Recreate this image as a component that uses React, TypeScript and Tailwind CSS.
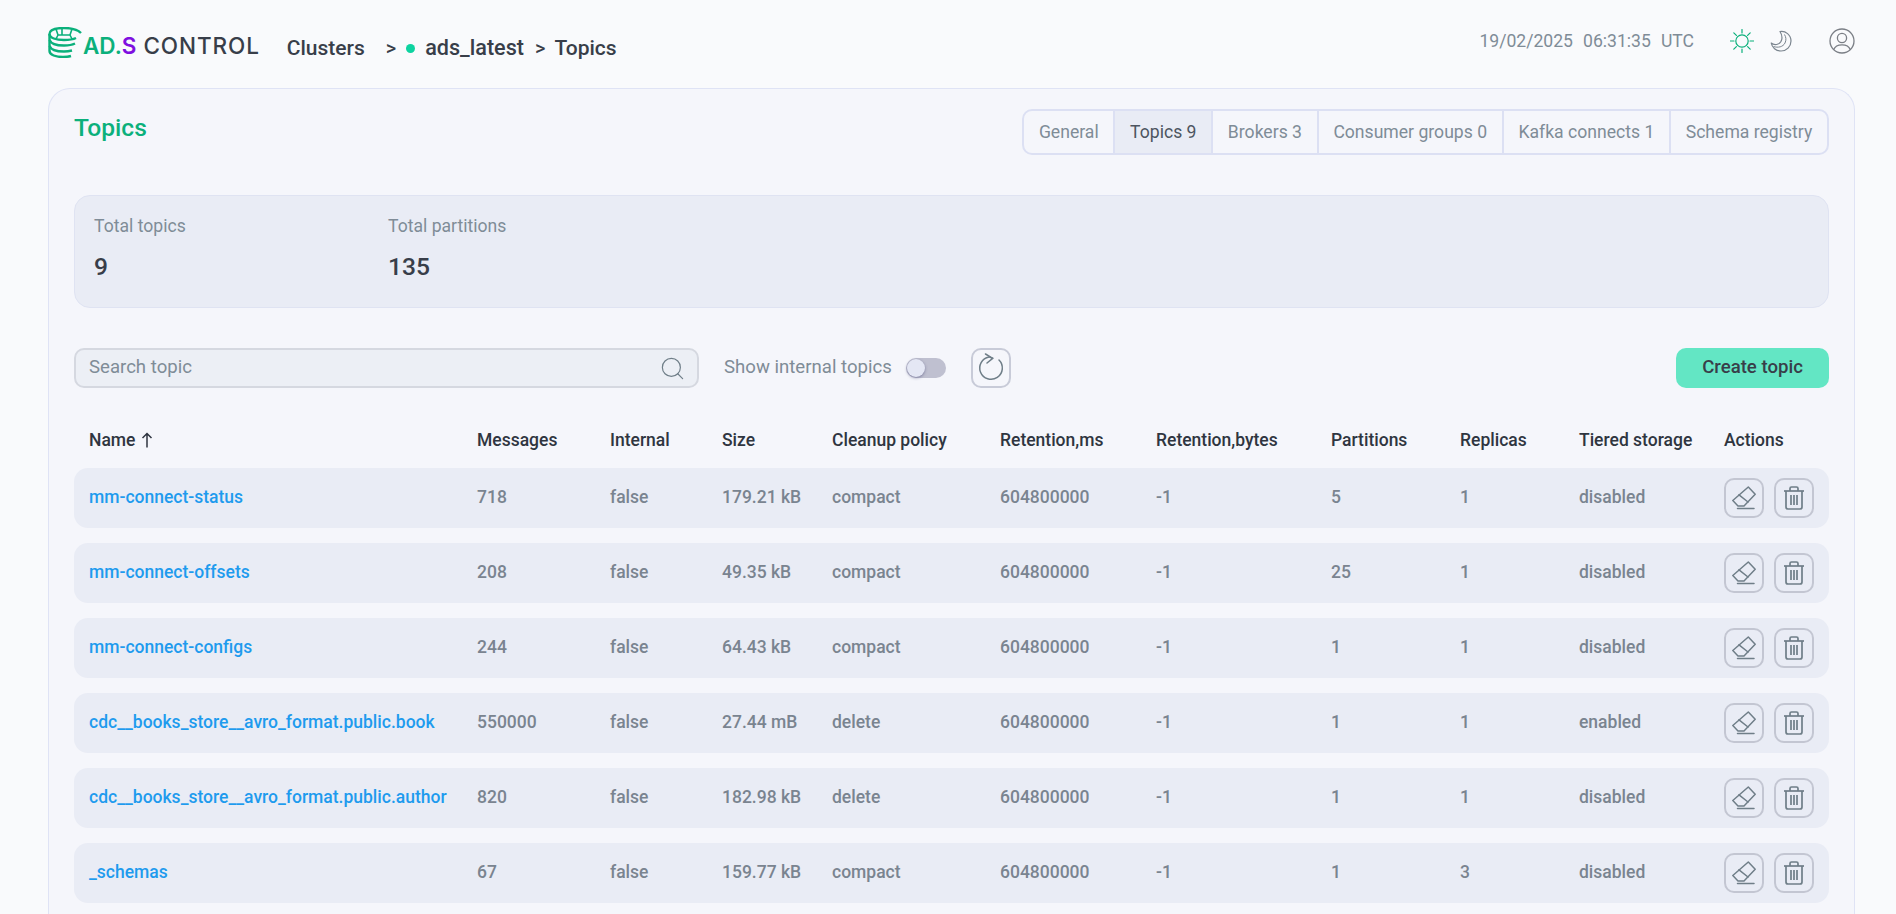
import { Search } from 'lucide-react'

const rowGrid =
  'grid grid-cols-[388px_133px_112px_110px_168px_156px_175px_129px_119px_145px_1fr] items-center pl-[15px]'

const topics = [
  { name: 'mm-connect-status', messages: '718', size: '179.21 kB', cleanup: 'compact', partitions: '5', replicas: '1', tiered: 'disabled' },
  { name: 'mm-connect-offsets', messages: '208', size: '49.35 kB', cleanup: 'compact', partitions: '25', replicas: '1', tiered: 'disabled' },
  { name: 'mm-connect-configs', messages: '244', size: '64.43 kB', cleanup: 'compact', partitions: '1', replicas: '1', tiered: 'disabled' },
  { name: 'cdc__books_store__avro_format.public.book', messages: '550000', size: '27.44 mB', cleanup: 'delete', partitions: '1', replicas: '1', tiered: 'enabled' },
  { name: 'cdc__books_store__avro_format.public.author', messages: '820', size: '182.98 kB', cleanup: 'delete', partitions: '1', replicas: '1', tiered: 'disabled' },
  { name: '_schemas', messages: '67', size: '159.77 kB', cleanup: 'compact', partitions: '1', replicas: '3', tiered: 'disabled' },
]

const tabs = [
  { label: 'General' },
  { label: 'Topics 9', active: true },
  { label: 'Brokers 3' },
  { label: 'Consumer groups 0' },
  { label: 'Kafka connects 1' },
  { label: 'Schema registry' },
]

function Logo() {
  return (
    <svg width="34" height="31" viewBox="0 0 34 31" fill="none" stroke="#0bb07b" strokeWidth="2.4">
      <path d="M33 6 C29 2 22 1 16 1 C8 1 1.5 3 1.5 7 C1.5 11 8 13 16 13 C21 13 25 12.5 28 11" />
      <path d="M8 2 L10 8 L22 8 L24 2 M10 8 L8 12 M22 8 L24 12 M14 2 L14 8" strokeWidth="1.6" />
      <path d="M1.5 7 V24 C1.5 28 8 30 15 30 C18 30 21 29.6 23 29" />
      <path d="M1.5 13 C3 17 9 18.5 16 18.5 C20 18.5 24 18 27 16.5" />
      <path d="M1.5 19 C3 23 9 24.5 16 24.5 C19 24.5 22 24 24 23.5" />
    </svg>
  )
}

function SunIcon() {
  return (
    <svg width="24" height="24" viewBox="0 0 24 24" fill="none" stroke="#0bb07b" strokeWidth="1.2" strokeLinecap="round">
      <circle cx="12" cy="12" r="6.2" />
      <path d="M12 0.5v3.5M12 20v3.5M0.5 12h3.5M20 12h3.5M3.8 3.8l2.6 2.6M17.6 17.6l2.6 2.6M3.8 20.2l2.6-2.6M17.6 6.4l2.6-2.6" />
    </svg>
  )
}

function MoonIcon() {
  return (
    <svg width="22" height="22" viewBox="0 0 22 22" fill="none" stroke="#7b858f" strokeWidth="1.2" strokeLinejoin="round">
      <path d="M10 1.5 C15.5 0.5 21 5 21 11 C21 16.5 16.5 21 11 21 C6 21 2 17.5 1.2 13 C3 14.5 5.5 15 8 14 C12 12.5 13.5 7 10 1.5 Z" />
      <path d="M3.5 16.5 C8 18 13 17 15 13 C16.5 10 16 7 14.5 4.5" strokeWidth="1" />
    </svg>
  )
}

function UserIcon() {
  return (
    <svg width="26" height="26" viewBox="0 0 26 26" fill="none" stroke="#7b7f86" strokeWidth="1.3">
      <circle cx="13" cy="13" r="12" />
      <circle cx="13" cy="10" r="4.6" />
      <path d="M4.8 21.5 C6 18 9 16.8 13 16.8 C17 16.8 20 18 21.2 21.5" />
    </svg>
  )
}

function RefreshIcon() {
  return (
    <svg width="30" height="30" viewBox="0 0 30 30" fill="none" stroke="#6f7e88" strokeWidth="1.5" strokeLinecap="round" strokeLinejoin="round">
      <path d="M23 7 A11.3 11.3 0 1 1 13 3.9 L16.7 5.3" />
      <path d="M9.5 1 L16.7 5.3 L11 10" />
    </svg>
  )
}

function EraserIcon() {
  return (
    <svg width="24" height="24" viewBox="0 0 24 24" fill="none" stroke="#6f7e88" strokeWidth="1.5" strokeLinejoin="round" strokeLinecap="round">
      <path d="M0.8 14.5 L16.3 1 L23.2 8.3 L12 20 H6 Z" />
      <path d="M7 8.8 L16 16" />
      <path d="M5.5 22.5 H22" />
    </svg>
  )
}

function TrashIcon() {
  return (
    <svg width="22" height="24" viewBox="0 0 22 24" fill="none" stroke="#6f7e88" strokeWidth="1.7" strokeLinejoin="round">
      <path d="M1 5 H21" />
      <path d="M7 5 V2.5 C7 1.5 7.5 1 8.5 1 H13.5 C14.5 1 15 1.5 15 2.5 V5" />
      <path d="M3 5 V21 C3 22.2 3.8 23 5 23 H17 C18.2 23 19 22.2 19 21 V5" />
      <path d="M8 9 V19 M11 9 V19 M14 9 V19" />
    </svg>
  )
}

function IconButton({ children }: { children: React.ReactNode }) {
  return (
    <button className="flex h-[40px] w-[40px] items-center justify-center rounded-[10px] border-2 border-[#c3c6d2]">
      {children}
    </button>
  )
}

export default function App() {
  return (
    <div className="flex h-screen flex-col overflow-hidden bg-[#f9fafc] pl-[48px] pr-[41px] font-['Roboto',sans-serif] text-[17.6px]">
      {/* Header */}
      <header className="flex h-[88px] shrink-0 items-start">
        <div className="mt-[27px] flex items-end">
          <Logo />
          <span className="ml-[1px] font-['Inter',sans-serif] text-[22.5px] font-semibold leading-[24px] text-[#0bb07b]">
            AD.<span className="text-[#7f0fe0]">S</span>
            <span className="ml-[7px] font-medium tracking-[0.9px] text-[#383e49]">CONTROL</span>
          </span>
        </div>
        <nav className="ml-[27px] mt-[34px] flex items-center text-[21px] font-medium leading-[28px] text-[#383e49]">
          <span>Clusters</span>
          <span className="ml-[21px] text-[20px]">&gt;</span>
          <span className="ml-[10px] h-[9px] w-[9px] rounded-full bg-[#0dd3a0]" />
          <span className="ml-[10px] text-[21.6px]">ads_latest</span>
          <span className="ml-[11px] text-[20px]">&gt;</span>
          <span className="ml-[9px]">Topics</span>
        </nav>
        <div className="ml-auto mt-[28px] flex items-center">
          <div className="flex gap-[10px] leading-[26px] text-[#7f8c97]">
            <span>19/02/2025</span>
            <span>06:31:35</span>
            <span>UTC</span>
          </div>
          <div className="ml-[36px]">
            <SunIcon />
          </div>
          <div className="ml-[16px]">
            <MoonIcon />
          </div>
          <div className="ml-[37px]">
            <UserIcon />
          </div>
        </div>
      </header>

      {/* Card */}
      <main className="min-h-0 flex-1 rounded-t-[22px] border border-b-0 border-[#dfe3f5] bg-[#f5f6fb] px-[25px] pt-[20px]">
        <div className="flex items-start justify-between">
          <h1 className="mt-[2px] text-[24.6px] font-medium leading-[34px] text-[#0bb07b]">Topics</h1>
          <div className="flex h-[46px] overflow-hidden rounded-[10px] border-2 border-[#dce0f3] text-[#7f8c97]">
            {tabs.map((tab) => (
              <div
                key={tab.label}
                className={
                  tab.active
                    ? 'flex items-center border-r-2 border-[#dce0f3] bg-[#e9ecf5] px-[14.7px] text-[#4d5560]'
                    : 'flex items-center border-r-2 border-[#dce0f3] px-[14.7px] last:border-r-0'
                }
              >
                {tab.label}
              </div>
            ))}
          </div>
        </div>

        {/* Stats */}
        <section className="mt-[40px] flex h-[113px] rounded-[16px] border border-[#dfe3f2] bg-[#e9ecf5] pl-[19px] pt-[18px]">
          <div className="w-[294px]">
            <div className="leading-[24px] text-[#7f8c97]">Total topics</div>
            <div className="mt-[13px] text-[24.6px] font-medium leading-[32px] text-[#383e49]">9</div>
          </div>
          <div>
            <div className="leading-[24px] text-[#7f8c97]">Total partitions</div>
            <div className="mt-[13px] text-[24.6px] font-medium leading-[32px] text-[#383e49]">135</div>
          </div>
        </section>

        {/* Toolbar */}
        <div className="mt-[40px] flex h-[40px] items-center">
          <div className="flex h-[40px] w-[625px] items-center justify-between rounded-[10px] border-2 border-[#d5d8e0] bg-[#eceff5] pl-[13px] pr-[11px]">
            <span className="text-[18.6px] text-[#7f8c97]">Search topic</span>
            <Search size={27} strokeWidth={1.05} className="text-[#6f7e88]" />
          </div>
          <span className="ml-[25px] text-[18.6px] text-[#7f8c97]">Show internal topics</span>
          <div className="relative ml-[14px] h-[20px] w-[40px] rounded-full bg-[#bfc0d0]">
            <div className="absolute left-[1px] top-[1px] h-[18px] w-[18px] rounded-full bg-[#e4e7f4] shadow-[0_1px_3px_rgba(60,60,110,0.5)]" />
          </div>
          <div className="ml-[25px] flex h-[40px] w-[40px] items-center justify-center rounded-[10px] border-2 border-[#c8cbd8]">
            <RefreshIcon />
          </div>
          <button className="ml-auto h-[40px] w-[153px] rounded-[10px] bg-[#63e6c4] text-[18.6px] font-medium text-[#383e49]">
            Create topic
          </button>
        </div>

        {/* Table */}
        <div className={`${rowGrid} mt-[32px] h-[40px] text-[17.5px] font-medium text-[#2f3540]`}>
          <div className="flex items-center gap-[6px]">
            Name
            <svg width="12" height="16" viewBox="0 0 12 16" fill="none" stroke="#2f3540" strokeWidth="1.5">
              <path d="M6 15.5 V1.5 M1.5 6 L6 1.5 L10.5 6" />
            </svg>
          </div>
          <div>Messages</div>
          <div>Internal</div>
          <div>Size</div>
          <div>Cleanup policy</div>
          <div>Retention,ms</div>
          <div>Retention,bytes</div>
          <div>Partitions</div>
          <div>Replicas</div>
          <div>Tiered storage</div>
          <div>Actions</div>
        </div>
        <div className="mt-[8px] flex flex-col gap-[15px]">
          {topics.map((t) => (
            <div key={t.name} className={`${rowGrid} h-[60px] rounded-[14px] bg-[#e9ecf5] pb-[1px] text-[17.5px] font-medium text-[#7a8490]`}>
              <div className="text-[#1e9bee]">{t.name}</div>
              <div>{t.messages}</div>
              <div>false</div>
              <div>{t.size}</div>
              <div>{t.cleanup}</div>
              <div>604800000</div>
              <div>-1</div>
              <div>{t.partitions}</div>
              <div>{t.replicas}</div>
              <div>{t.tiered}</div>
              <div className="flex gap-[10px]">
                <IconButton>
                  <EraserIcon />
                </IconButton>
                <IconButton>
                  <TrashIcon />
                </IconButton>
              </div>
            </div>
          ))}
        </div>
      </main>
    </div>
  )
}
